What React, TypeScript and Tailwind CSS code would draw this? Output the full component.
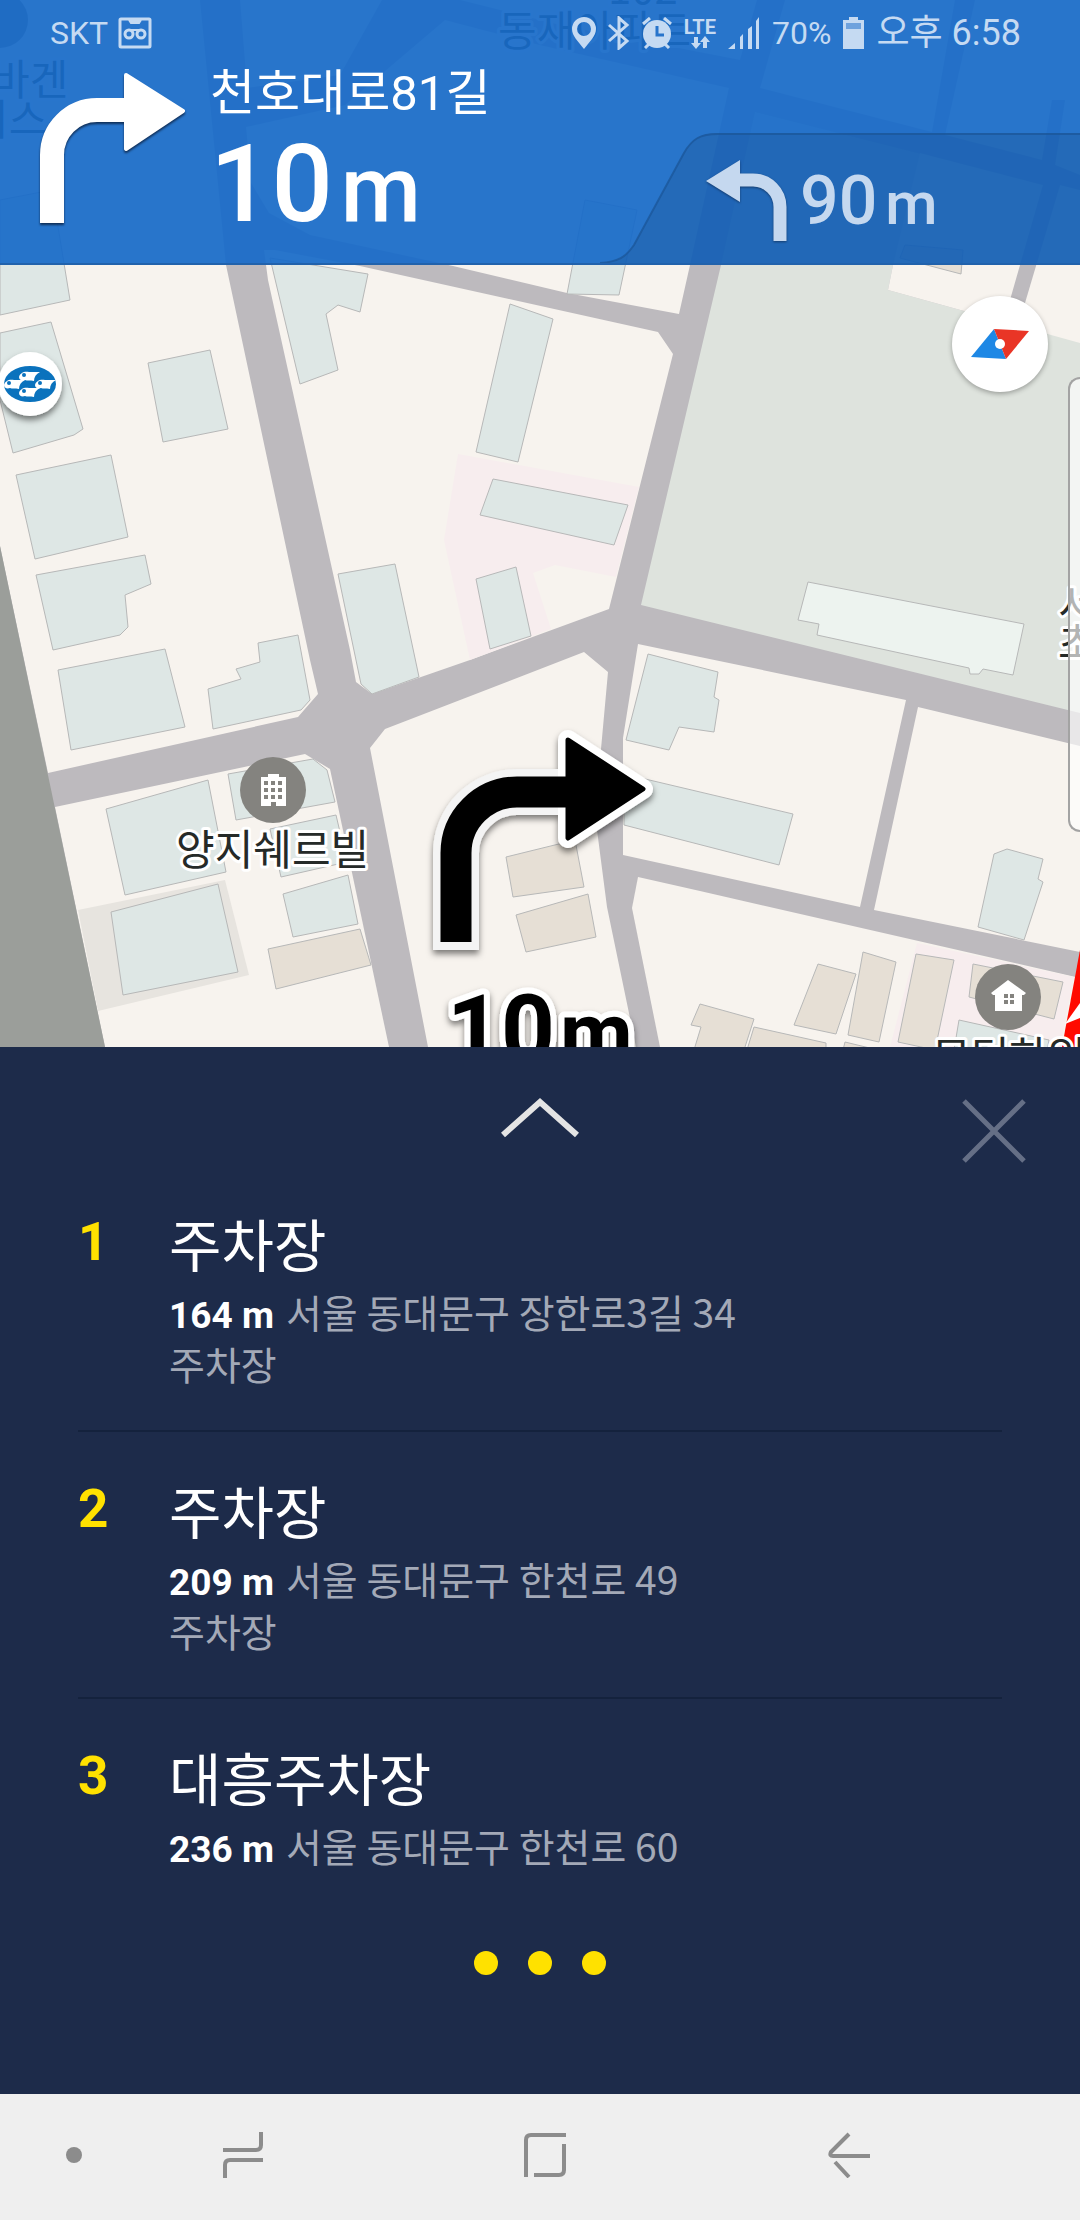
import type { ReactNode } from 'react';

type Place = {
  distance: string;
  name: string;
  address: string;
  category?: string;
};

const places: Place[] = [
  { distance: '164 m', name: '주차장', address: '서울 동대문구 장한로3길 34', category: '주차장' },
  { distance: '209 m', name: '주차장', address: '서울 동대문구 한천로 49', category: '주차장' },
  { distance: '236 m', name: '대흥주차장', address: '서울 동대문구 한천로 60' },
];

// city blocks, the streets are what is left between them
const blocks = [
  '0,0 200,0 226,265 310,660 318,694 298,717 48,773 0,546',
  '55,807 305,754 330,769 389,1047 105,1047',
  '264,250 268,280 350,650 356,682 372,694 470,660 609,609 673,354 658,332 360,266 275,250',
  '240,0 382,0 340,75 247,88',
  '246,127 345,105 445,20 540,45 729,88 690,265 679,314 567,293 453,266 310,235 269,213 251,183',
  '460,0 757,0 740,60 560,25',
  '785,0 955,0 932,132 760,88',
  '975,0 1080,0 1080,175 1055,165 1065,100 1052,100 1042,160 945,135',
  '1060,185 1080,190 1080,350 1017,330',
  '638,644 700,657 906,700 860,907 623,855 623,738',
  '918,707 1080,746 1080,952 874,910',
  '638,877 700,891 1080,978 1080,1047 660,1047 632,908',
  '370,748 385,729 584,652 608,672 600,760 597,830 607,907 636,1047 428,1047',
];

const buildings = [
  '0,200 52,190 70,300 0,315',
  '0,333 51,322 83,429 74,435 13,453 0,400',
  '148,363 210,350 228,429 163,442',
  '16,475 111,455 128,537 35,559',
  '36,575 145,555 151,584 125,595 128,627 120,635 53,650',
  '58,670 165,649 185,727 71,750',
  '258,643 298,635 310,700 301,710 213,729 208,689 241,679 236,669 260,662',
  '270,258 313,265 368,274 360,312 338,305 326,314 338,370 300,384',
  '338,574 395,564 419,677 372,694 361,684',
  '510,304 553,319 518,462 476,452',
  '493,479 628,505 614,545 480,515',
  '476,579 516,567 531,636 490,649',
  '585,200 637,210 619,295 567,294',
  '106,809 208,780 226,872 125,895',
  '228,774 313,759 327,770 335,802 236,820',
  '270,829 336,815 347,862 281,877',
  '283,894 348,875 358,924 293,937',
  '648,654 718,672 714,697 719,700 714,732 679,727 669,750 626,740',
  '624,774 793,814 779,865 624,825',
  '959,1020 1049,1040 1047,1050 954,1050',
  '994,854 1007,849 1043,859 1038,879 1043,882 1024,940 978,927',
];

const houses = [
  '268,949 360,929 371,965 276,989',
  '506,857 575,840 584,887 513,897',
  '516,915 588,894 596,937 526,952',
  '700,1004 754,1019 744,1050 694,1050 701,1027 691,1025',
  '754,1027 826,1043 826,1050 747,1050',
  '845,1042 878,1050 843,1050',
  '818,964 856,974 836,1034 794,1025',
  '863,952 896,962 879,1042 848,1035',
  '916,954 954,960 935,1050 898,1042',
  '973,964 1063,982 1054,1019 969,997',
  '900,258 961,274 963,250 905,245',
];

const Fish = ({ x, y }: { x: number; y: number }) => (
  <g transform={`translate(${x} ${y})`}>
    <path d="M-10 1C-9-3-5-5 0-4L11-4C7-2 5 1 5 5C1 4-2 5-4 4C-7 5-10 4-10 1Z" fill="#fff" />
    <circle cx="-5" cy="-1" r="2" fill="#0a72bd" />
  </g>
);

const MapView = () => (
  <svg
    viewBox="0 0 1080 1047"
    preserveAspectRatio="xMidYMin slice"
    className="absolute inset-0 h-full w-full font-['Noto_Sans_CJK_KR',sans-serif]"
  >
    <defs>
      <filter id="soft" x="-20%" y="-20%" width="140%" height="140%">
        <feDropShadow dx="0" dy="4" stdDeviation="3" floodOpacity="0.5" />
      </filter>
    </defs>

    <rect width="1080" height="1047" fill="#bdbabe" />
    <g fill="#f7f3ee">
      {blocks.map((points) => <polygon key={points} points={points} />)}
    </g>
    <polygon points="0,546 105,1047 0,1047" fill="#9b9e9a" />
    <polygon points="641,605 721,265 755,112 925,155 893,265 888,290 964,311 1080,343 1080,713" fill="#dee3dd" />
    <polygon points="893,265 920,153 1043,185 1010,300 1010,324 964,311 888,290" fill="#f7f3ee" />
    <polygon points="458,454 639,487 616,577 555,565 533,573 551,629 470,660 444,540" fill="#f7edee" />
    <polygon points="917,943 1074,977 1060,1047 890,1047" fill="#f7edee" />
    <polygon points="78,910 225,880 249,975 98,1011" fill="#e7e4df" />

    <g stroke="#b7b8b8" strokeWidth="1">
      <g fill="#dee7e5">
        {buildings.map((points) => <polygon key={points} points={points} />)}
        <polygon points="111,912 218,884 238,972 123,995" />
      </g>
      <g fill="#e6dfd5">
        {houses.map((points) => <polygon key={points} points={points} />)}
      </g>
      <polygon
        points="808,582 1024,624 1013,675 983,669 979,674 970,674 969,668 817,635 819,624 798,620"
        fill="#edf3ef"
      />
    </g>

    {/* route */}
    <polygon points="1080,950 1062,1047 1080,1047" fill="#ff0a00" />
    <polygon points="1065,1024 1080,1003 1080,1018" fill="#fff" />

    {/* poi markers */}
    <circle cx="0" cy="20" r="28" fill="#84837f" />
    <g filter="url(#soft)">
      <circle cx="30" cy="384" r="32" fill="#fff" />
    </g>
    <ellipse cx="30" cy="384" rx="26" ry="18" fill="#0a72bd" />
    <Fish x={29} y={376} />
    <Fish x={14} y={384} />
    <Fish x={45} y={384} />
    <Fish x={29} y={392} />

    <circle cx="273" cy="790" r="33" fill="#84837f" />
    <path d="M261 777h7v-3h11v3h7v29h-10v-4h-5v4h-10z" fill="#fff" />
    <path d="M264 781h4v4h-4zm7 0h4v4h-4zm7 0h4v4h-4zm-14 7h4v4h-4zm7 0h4v4h-4zm7 0h4v4h-4zm-14 7h4v4h-4zm7 0h4v4h-4zm7 0h4v4h-4z" fill="#84837f" />

    <circle cx="1008" cy="997" r="33" fill="#84837f" />
    <path d="M1008 980L1026 993L1024 995H1022V1011H995V995H993L991 993Z" fill="#fff" />
    <path d="M1004 994h4v4h-4zm6 0h4v4h-4zm-6 6h4v4h-4zm6 0h4v4h-4z" fill="#84837f" />

    <g fill="#252a28" stroke="#fff" strokeWidth="6" strokeLinejoin="round" paintOrder="stroke" fontSize="42">
      <text x="-9" y="95">바겐</text>
      <text x="-30" y="135">비스</text>
      <text x="498" y="46">동재아파트</text>
      <text x="608" y="4">102</text>
      <text x="176" y="865">양지쉐르빌</text>
      <text x="1058" y="620">서울</text>
      <text x="1058" y="658">초교</text>
      <text x="932" y="1072">모던하임</text>
    </g>

    {/* turn arrow */}
    <g filter="url(#soft)">
      <path d="M456 950V853A61 61 0 0 1 517 792H566" fill="none" stroke="#f4f4f4" strokeWidth="46" />
      <path d="M568 740L643 789L568 838Z" fill="#fff" stroke="#fff" strokeWidth="20" strokeLinejoin="round" />
    </g>
    <path d="M456 942V853A61 61 0 0 1 517 792H568" fill="none" stroke="#000" strokeWidth="31" />
    <path d="M568 740L643 789L568 838Z" fill="#000" stroke="#000" strokeWidth="5" strokeLinejoin="round" />
    <g
      filter="url(#soft)"
      stroke="#fff"
      strokeWidth="12"
      strokeLinejoin="round"
      paintOrder="stroke"
      className="font-['Roboto',sans-serif] font-bold"
    >
      <text x="447" y="1062" fontSize="94">10</text>
      <text x="560" y="1062" fontSize="84">m</text>
    </g>
  </svg>
);

const StatusBar = () => (
  <div className="flex h-16 items-center justify-between pt-0.5 pr-[59px] pl-[50px] text-[32px] leading-[56px] text-[#c5daf2]">
    <div className="flex items-center gap-[10px]">
      <span>SKT</span>
      <svg width="34" height="32" viewBox="0 0 34 32" fill="none" stroke="currentColor" strokeWidth="3">
        <rect x="2" y="2" width="30" height="28" rx="1" />
        <path d="M11 3l2 3h8l2-3" fill="currentColor" strokeWidth="2" />
        <circle cx="11" cy="17" r="4" />
        <circle cx="23" cy="17" r="4" />
        <path d="M9 13h16" strokeWidth="2" />
      </svg>
    </div>
    <div className="flex items-center gap-3">
      <svg width="24" height="32" viewBox="0 0 24 32" fill="currentColor">
        <path fillRule="evenodd" d="M12 0a12 12 0 0 1 12 12c0 7-6 12-12 20C6 24 0 19 0 12A12 12 0 0 1 12 0zm0 5a7 7 0 1 0 0 14a7 7 0 0 0 0-14z" />
      </svg>
      <svg width="22" height="34" viewBox="0 0 22 34" fill="none" stroke="currentColor" strokeWidth="3">
        <path d="M1 9L19 25L11 32V2L19 9L1 25" />
      </svg>
      <svg width="30" height="32" viewBox="0 0 30 32" fill="none" stroke="currentColor" strokeWidth="3">
        <circle cx="15" cy="17" r="14" fill="currentColor" stroke="none" />
        <path d="M1 7l7-6M29 7l-7-6M3 31l5-5M27 31l-5-5" />
        <path d="M15 9v9h7" stroke="#2874cb" strokeWidth="3" />
      </svg>
      <div className="flex flex-col items-center">
        <span className="text-xl leading-[18px] font-bold">LTE</span>
        <svg width="20" height="13" viewBox="0 0 20 13" fill="currentColor">
          <path d="M4 1h4v6h3l-5 6l-5-6h3zM13 12h4V6h3l-5-6l-5 6h3z" />
        </svg>
      </div>
      <svg width="32" height="32" viewBox="0 0 32 32" fill="currentColor">
        <path d="M0 32l7-6v6zM12 20l3-3v15h-3zM20 12l4-3v23h-4zM28 4l3-4v32h-3z" />
      </svg>
      <span>70%</span>
      <svg width="21" height="32" viewBox="0 0 21 32" fill="currentColor">
        <path d="M6 0h9v3h6v29H0V3h6z" />
        <path d="M3 6h15v6H3z" fill="#6fa2dd" />
      </svg>
      <span className="text-4xl">오후 6:58</span>
    </div>
  </div>
);

const Guidance = () => (
  <header className="relative h-[265px] border-b-2 border-[#2162ac] bg-[#186ac8]/93">
    <StatusBar />
    <div className="flex items-start gap-[18px] pl-9">
      <svg width="156" height="164" viewBox="36 66 156 164" className="mt-0.5 shrink-0 drop-shadow-[0_2px_1px_rgba(10,30,60,0.8)]">
        <path d="M52 223V155A45 45 0 0 1 97 110H126" fill="none" stroke="#fff" strokeWidth="24" />
        <path d="M126 75L183 111L126 149Z" fill="#fff" stroke="#fff" strokeWidth="4" strokeLinejoin="round" />
      </svg>
      <div className="text-white">
        <p className="text-[49px] leading-[60px]">천호대로81길</p>
        <p className="flex items-baseline gap-2 text-[108px] leading-[120px] font-medium">
          10<span className="text-[92px]">m</span>
        </p>
      </div>
    </div>
    <div className="absolute right-0 bottom-0 h-[130px] w-[480px] text-[#c5d8ef]">
      <svg width="480" height="130" viewBox="0 0 480 130" className="absolute inset-0">
        <path d="M0 130C18 129 26 124 34 112L84 20C92 6 100 0 118 0H480V130Z" fill="#000" fillOpacity="0.09" />
        <path d="M0 130C18 129 26 124 34 112L84 20C92 6 100 1 118 1H480" fill="none" stroke="#1c579b" strokeWidth="2" strokeOpacity="0.8" />
      </svg>
      <div className="relative flex items-start gap-3 pt-6 pl-[104px]">
        <svg width="84" height="88" viewBox="704 157 84 88" className="drop-shadow-[0_1px_1px_rgba(10,30,60,0.6)]">
          <path d="M780 241V207A27 27 0 0 0 753 180H739" fill="none" stroke="currentColor" strokeWidth="13" />
          <path d="M740 160V202L706 181Z" fill="currentColor" />
        </svg>
        <p className="flex items-baseline gap-2 text-[68px] leading-[88px] font-medium">
          90<span className="text-[60px]">m</span>
        </p>
      </div>
    </div>
  </header>
);

const IconButton = ({ label, children, className = '' }: { label: string; children: ReactNode; className?: string }) => (
  <button type="button" aria-label={label} className={`flex items-center justify-center ${className}`}>
    {children}
  </button>
);

const PlaceItem = ({ place, index }: { place: Place; index: number }) => (
  <li className="flex border-b-2 border-[#14223d] pt-[34px] pb-[41px] last:border-b-0">
    <span className="w-[91px] shrink-0 text-[53px] leading-[86px] font-bold text-[#ffe100]">{index}</span>
    <div className="font-['Noto_Sans_CJK_KR',sans-serif]">
      <h2 className="text-[57px] leading-[86px] text-white">{place.name}</h2>
      <p className="text-[39px] leading-[52px] text-[#a3a9b7]">
        <strong className="mr-3 font-['Roboto',sans-serif] text-[37px] leading-none font-bold text-white">{place.distance}</strong>
        {place.address}
      </p>
      {place.category && <p className="text-[39px] leading-[52px] text-[#a3a9b7]">{place.category}</p>}
    </div>
  </li>
);

const ResultPanel = () => (
  <section className="h-[1047px] bg-[#1d2b4a] px-[78px]">
    <div className="relative flex h-[118px] justify-center pt-[50px]">
      <IconButton label="펼치기" className="h-[42px]">
        <svg width="80" height="42" viewBox="0 0 80 42" fill="none" stroke="#e4e4e4" strokeWidth="6">
          <path d="M3 38L40 5L77 38" />
        </svg>
      </IconButton>
      <IconButton label="닫기" className="absolute top-[52px] right-[-24px]">
        <svg width="64" height="64" viewBox="0 0 64 64" fill="none" stroke="#656f86" strokeWidth="5">
          <path d="M2 2L62 62M62 2L2 62" />
        </svg>
      </IconButton>
    </div>
    <ol>
      {places.map((place, i) => <PlaceItem key={place.address} place={place} index={i + 1} />)}
    </ol>
    <div className="mt-[39px] flex justify-center gap-[30px]">
      <span className="size-6 rounded-full bg-[#ffe100]" />
      <span className="size-6 rounded-full bg-[#ffe100]" />
      <span className="size-6 rounded-full bg-[#ffe100]" />
    </div>
  </section>
);

const NavigationBar = () => (
  <nav className="grid h-[126px] grid-cols-[148fr_190fr_414fr_194fr_134fr] items-center bg-[#efefef] pb-1 text-[#8c8c8c]">
    <IconButton label="숨기기">
      <span className="size-4 rounded-full bg-current" />
    </IconButton>
    <IconButton label="최근 앱">
      <svg width="42" height="48" viewBox="0 0 42 48" fill="none" stroke="currentColor" strokeWidth="4">
        <path d="M1 19H34Q39 19 39 14V1M41 29H8Q3 29 3 34V47" />
      </svg>
    </IconButton>
    <IconButton label="홈">
      <svg width="42" height="46" viewBox="0 0 42 46" fill="none" stroke="currentColor" strokeWidth="4">
        <path d="M2 45V8Q2 3 7 3H42M10 43H35Q40 43 40 38V12" />
      </svg>
    </IconButton>
    <IconButton label="뒤로">
      <svg width="42" height="46" viewBox="0 0 42 46" fill="none" stroke="currentColor" strokeWidth="4">
        <path d="M21 2L3 20Q1 24 5 24H42M7 30L21 45" />
      </svg>
    </IconButton>
  </nav>
);

export default function App() {
  return (
    <main className="font-['Roboto','Noto_Sans_CJK_KR',sans-serif]">
      <section className="relative h-[1047px] overflow-hidden">
        <MapView />
        <Guidance />
        <IconButton
          label="나침반"
          className="absolute top-[296px] right-8 size-24 rounded-full bg-white shadow-[0_2px_5px_rgba(0,0,0,0.3)]"
        >
          <svg width="60" height="32" viewBox="0 0 60 32">
            <path d="M24 1L36 31L1 29Z" fill="#1e88e5" />
            <path d="M24 1L59 3L36 31Z" fill="#e93526" />
            <circle cx="30" cy="16" r="5" fill="#fff" />
          </svg>
        </IconButton>
        <div className="absolute top-[377px] right-0 h-[455px] w-3 rounded-l-xl border-2 border-r-0 border-[#a3a3a3] bg-white/65" />
      </section>
      <ResultPanel />
      <NavigationBar />
    </main>
  );
}
